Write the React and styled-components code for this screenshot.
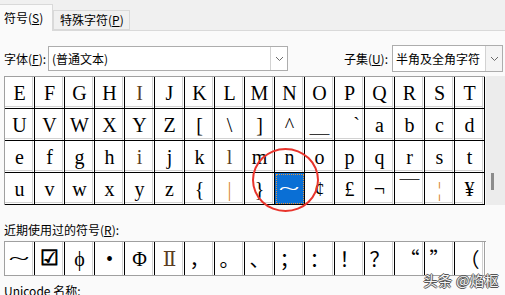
import React from "react";
import styled, { createGlobalStyle } from "styled-components";

const serifStack = `"Liberation Serif", "DejaVu Serif", "Noto Sans CJK SC", serif`;
const cjkStack = `"Noto Sans CJK SC", "Liberation Serif", sans-serif`;

const GlobalStyle = createGlobalStyle`
    body {
        margin: 0;
        background: #fafafa;
    }
`;

const Dialog = styled.div`
    position: relative;
    width: 505px;
    height: 295px;
    overflow: hidden;
    background: #fafafa;
    font-family: "Noto Sans CJK SC", "Liberation Sans", sans-serif;
    font-size: 12px;
    color: #000;
`;

const TabStrip = styled.div`
    display: flex;
    align-items: flex-end;
    height: 30px;
    background: #f0f0f0;
    border-bottom: 1px solid #d9d9d9;
`;

const Tab = styled.div`
    box-sizing: border-box;
    display: flex;
    align-items: center;
    width: ${(p) => (p.$active ? 53 : 77)}px;
    height: ${(p) => (p.$active ? 27 : 20)}px;
    padding-left: ${(p) => (p.$active ? 4 : 6)}px;
    margin-bottom: ${(p) => (p.$active ? -1 : 0)}px;
    background: ${(p) => (p.$active ? "#fafafa" : "#f0f0f0")};
    border: 1px solid #d9d9d9;
    border-bottom: ${(p) => (p.$active ? "none" : "1px solid #d9d9d9")};
    border-left: ${(p) => (p.$active ? "none" : "1px solid #d9d9d9")};
    line-height: 16px;
`;

const Key = styled.span`
    text-decoration: underline;
`;

const Panel = styled.div`
    padding-left: 4px;
`;

const FontRow = styled.div`
    display: flex;
    align-items: center;
    height: 27px;
    margin-top: 14px;
`;

const Label = styled.span`
    width: ${(p) => (p.$width ? `${p.$width}px` : "auto")};
    margin-left: ${(p) => (p.$push ? "auto" : "0")};
    margin-right: ${(p) => (p.$push ? "4px" : "0")};
    line-height: 16px;
    white-space: nowrap;
`;

const Combo = styled.div`
    box-sizing: border-box;
    display: flex;
    width: ${(p) => p.$width}px;
    height: ${(p) => p.$height || 25}px;
    margin-right: ${(p) => p.$gap || 0}px;
    background: #fff;
    border: 1px solid #adadad;
`;

const ComboText = styled.div`
    flex: 1;
    display: flex;
    align-items: center;
    padding-left: 3px;
`;

const ComboButton = styled.div`
    display: flex;
    align-items: center;
    justify-content: center;
    width: 16px;
    background: ${(p) => (p.$shaded ? "#f4f4f4" : "#fff")};
    border-left: 1px solid #d2d2d2;
`;

const GridArea = styled.div`
    display: flex;
    margin-top: 4px;
`;

const Grid = styled.div`
    display: grid;
    grid-template-columns: repeat(16, 30px);
    grid-auto-rows: 32px;
    border-left: 1px solid #a0a0a0;
    border-top: 1px solid #a0a0a0;
    background: #fff;
`;

const ScrollTrack = styled.div`
    display: flex;
    flex-direction: column;
    justify-content: flex-end;
    width: 19px;
    margin-left: 1px;
    background: #ececec;
`;

const ScrollThumb = styled.div`
    width: 3px;
    height: 17px;
    margin: 0 0 15px 5px;
    background: #8c8c8c;
`;

const Cell = styled.div`
    box-sizing: border-box;
    display: flex;
    align-items: center;
    justify-content: ${(p) => p.$align || "center"};
    padding: 0 ${(p) => (p.$align ? 4 : 0)}px;
    border-right: 1px solid ${(p) => (p.$last ? "#a0a0a0" : "#000")};
    border-bottom: ${(p) => (p.$flat ? "none" : "1px solid #000")};
    box-shadow: inset -1px 0 #fff, inset -2px 0 #d2d2d2,
        ${(p) => (p.$flat ? "inset 0 0 transparent" : "inset 0 -1px #fff, inset 0 -2px #d2d2d2")};
    background: #fff;
    font-family: ${(p) => (p.$cjk ? cjkStack : serifStack)};
    font-size: ${(p) => p.$size || 20}px;
    font-weight: ${(p) => (p.$bold ? 700 : 400)};
    color: ${(p) => p.$tint || "#000"};
    line-height: 1;
    white-space: pre;

    &.selected {
        background: #0a6fd5;
        color: #fff;
        box-shadow: none;
        outline: 1px dotted #e8963a;
        outline-offset: -2px;
    }
`;

const Wave = styled.span`
    display: inline-block;
    font-family: "Liberation Serif", serif;
    font-size: 19px;
    transform: scaleX(2);
    margin-left: ${(p) => p.$shift || 0}px;
`;

const RecentLabel = styled.div`
    margin-top: 17px;
    line-height: 16px;
`;

const RecentRow = styled.div`
    display: flex;
    width: 482px;
    height: 35px;
    margin-top: 3px;
    box-sizing: border-box;
    border: 1px solid #a0a0a0;
    border-right: none;
    background: #fff;

    & > div {
        width: 30px;
    }
`;

const UnicodeLabel = styled.div`
    margin-top: 7px;
    line-height: 16px;
`;

const Ring = styled.div`
    position: absolute;
    left: 252px;
    top: 148px;
    width: 67px;
    height: 64px;
    box-sizing: border-box;
    border: 2px solid #e8342c;
    border-radius: 50%;
    pointer-events: none;
`;

const Watermark = styled.div`
    position: absolute;
    right: 6px;
    bottom: 5px;
    font-size: 14px;
    color: #f4f4f4;
    text-shadow: 1px 0 #555, -1px 0 #555, 0 1px #555, 0 -1px #555;
    letter-spacing: 0.5px;
`;

const Chevron = () => (
    <svg width="9" height="6" viewBox="0 0 9 6">
        <polyline points="1,1 4.5,4.5 8,1" fill="none" stroke="#6a6a6a" strokeWidth="1" />
    </svg>
);

const orange = "#d98a2e";
const brown = "#5a3c22";

const rows = [
    [..."EFGH", { ch: "I", tint: brown }, ..."JKLMNOPQRST"],
    [..."UVWXYZ[\\]^", { ch: "＿", cjk: true }, { ch: "`", align: "flex-end" }, ..."abcd"],
    [..."efgh", { ch: "i", tint: brown }, ..."jk", { ch: "l", tint: brown }, ..."mnopqrst"],
    [
        ..."uvwxyz{",
        { ch: "|", tint: orange },
        "}",
        { wave: true, selected: true },
        "¢",
        "£",
        "¬",
        { ch: "￣", cjk: true },
        { ch: "¦", tint: orange },
        "¥",
    ],
];

const recent = [
    { wave: true, shift: 0 },
    { ch: "☑", bold: true, size: 21 },
    "ϕ",
    "•",
    "Φ",
    { ch: "Ⅱ", tint: brown },
    { ch: "，", cjk: true },
    { ch: "。", cjk: true },
    { ch: "、", cjk: true },
    { ch: "；", cjk: true },
    { ch: "：", cjk: true },
    { ch: "！", cjk: true },
    { ch: "？", cjk: true },
    { ch: "“", cjk: true },
    { ch: "”", cjk: true },
    { ch: "（", cjk: true },
];

function Symbol({ item, flat, last }) {
    const s = typeof item === "string" ? { ch: item } : item;
    return (
        <Cell
            className={s.selected ? "selected" : undefined}
            $cjk={s.cjk}
            $tint={s.tint}
            $align={s.align}
            $bold={s.bold}
            $size={s.size}
            $flat={flat}
            $last={last}
        >
            {s.wave ? <Wave $shift={s.shift}>~</Wave> : s.ch}
        </Cell>
    );
}

function App() {
    return (
        <Dialog>
            <GlobalStyle />
            <TabStrip>
                <Tab $active>
                    符号(<Key>S</Key>)
                </Tab>
                <Tab>
                    特殊字符(<Key>P</Key>)
                </Tab>
            </TabStrip>
            <Panel>
                <FontRow>
                    <Label $width={44}>
                        字体(<Key>F</Key>):
                    </Label>
                    <Combo $width={240}>
                        <ComboText>(普通文本)</ComboText>
                        <ComboButton>
                            <Chevron />
                        </ComboButton>
                    </Combo>
                    <Label $push>
                        子集(<Key>U</Key>):
                    </Label>
                    <Combo $width={111} $height={27} $gap={2}>
                        <ComboText>半角及全角字符</ComboText>
                        <ComboButton $shaded>
                            <Chevron />
                        </ComboButton>
                    </Combo>
                </FontRow>
                <GridArea>
                    <Grid>
                        {rows.flat().map((item, i) => (
                            <Symbol key={i} item={item} />
                        ))}
                    </Grid>
                    <ScrollTrack>
                        <ScrollThumb />
                    </ScrollTrack>
                </GridArea>
                <RecentLabel>
                    近期使用过的符号(<Key>R</Key>):
                </RecentLabel>
                <RecentRow>
                    {recent.map((item, i) => (
                        <Symbol key={i} item={item} flat last={i === recent.length - 1} />
                    ))}
                </RecentRow>
                <UnicodeLabel>Unicode 名称:</UnicodeLabel>
            </Panel>
            <Ring />
            <Watermark>头条 @焰枢</Watermark>
        </Dialog>
    );
}

export default App;
